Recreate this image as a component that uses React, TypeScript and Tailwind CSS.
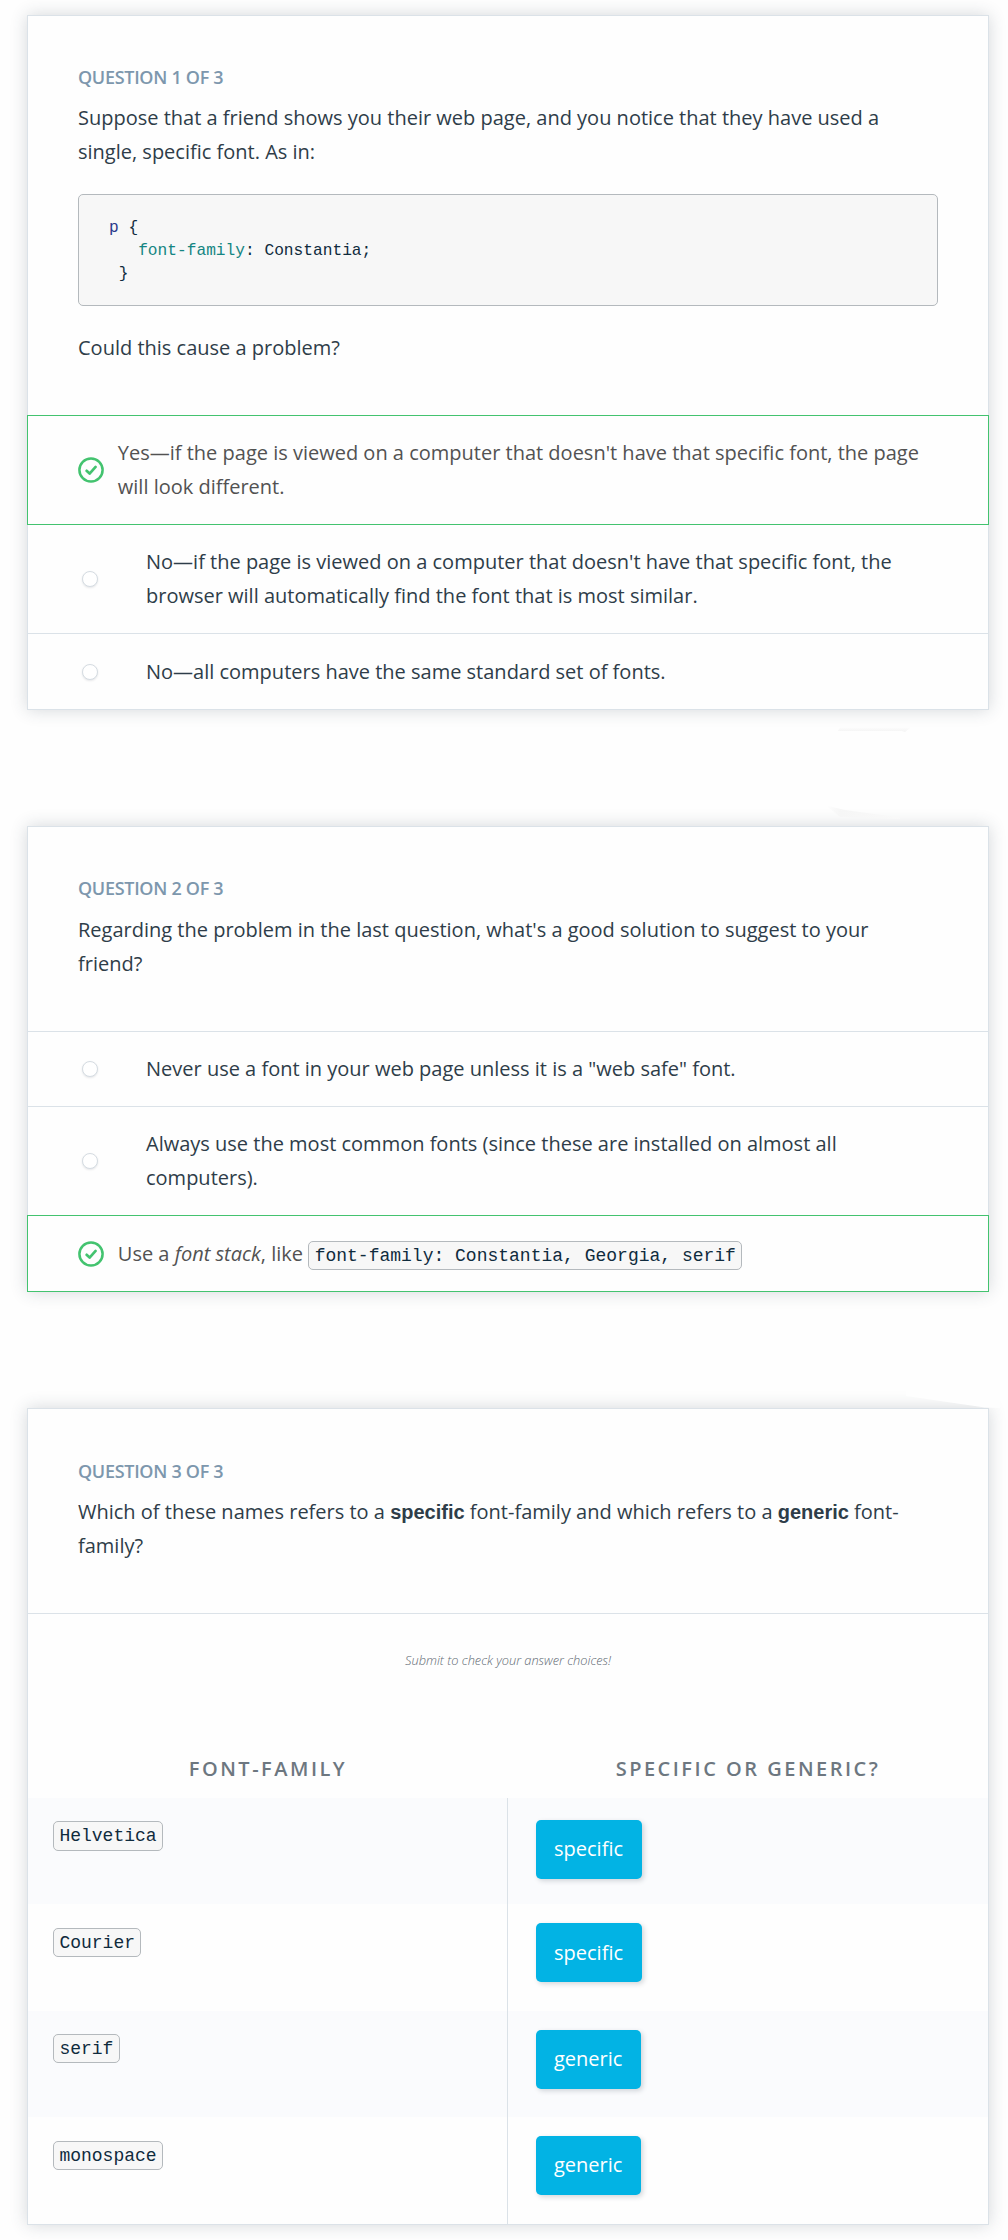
import React from "react";

const CARD =
  "w-[962px] border border-[#dbe2e8] bg-[#fefefe] shadow-[0_0_16px_rgba(46,61,73,0.2)]";

function Heading({ n }: { n: number }) {
  return (
    <div className="h-6 text-[18px] leading-6 font-semibold tracking-[-0.3px] text-[#7d97ad] whitespace-nowrap">
      QUESTION {n} OF 3
    </div>
  );
}

function Code({ children }: { children: React.ReactNode }) {
  return (
    <code className="rounded-[5px] border border-[#b4b9bd] bg-[#f7f7f7] px-[5.4px] py-[3.6px] font-['Liberation_Mono',monospace] text-[18px] text-[#0f2b3d]">
      {children}
    </code>
  );
}

function Check() {
  return (
    <svg className="h-[26px] w-[26px] shrink-0" viewBox="0 0 26 26" fill="none" stroke="#43c36f">
      <circle cx="13" cy="13" r="11.6" strokeWidth="2.5" />
      <path d="M8.6 13.8L11.6 16.6L17.6 9.9" strokeWidth="2.7" strokeLinecap="round" strokeLinejoin="round" />
    </svg>
  );
}

function Correct({ className, children }: { className: string; children: React.ReactNode }) {
  return (
    <div className={`-mx-px flex items-center border border-[#43c36f] pl-[50px] ${className}`}>
      <Check />
      <div className="ml-[13.8px] w-[815px] text-[#525252]">{children}</div>
    </div>
  );
}

function Choice({ className, children }: { className: string; children: React.ReactNode }) {
  return (
    <div className={`flex items-center border-[#dbe2e8] pl-[54px] ${className}`}>
      <span className="h-[16px] w-[16px] shrink-0 rounded-full border border-[#d5dce2] bg-white shadow-[0_1px_2px_rgba(46,61,73,0.12)]" />
      <div className="ml-[48px] w-[770px]">{children}</div>
    </div>
  );
}

const ROWS = [
  { name: "Helvetica", kind: "specific", pad: "pt-[22px]", text: "pt-[12px]" },
  { name: "Courier", kind: "specific", pad: "pt-[18.6px]", text: "pt-[13px]" },
  { name: "serif", kind: "generic", pad: "pt-[19px]", text: "pt-[12px]" },
  { name: "monospace", kind: "generic", pad: "pt-[18.6px]", text: "pt-[12px]" },
];

/* Soft page texture in the right margin between the cards. */
function Wisps() {
  return (
    <svg className="pointer-events-none absolute top-0 left-0 h-[2240px] w-[1008px]" viewBox="0 0 1008 2240">
      <defs>
        <linearGradient id="fadeUp" x1="0" y1="1" x2="0" y2="0">
          <stop offset="0" stopColor="#f3f3f3" />
          <stop offset="1" stopColor="#fefefe" />
        </linearGradient>
        <linearGradient id="fadeLeft" x1="0" y1="0" x2="1" y2="0">
          <stop offset="0" stopColor="#f6f6f6" stopOpacity="0" />
          <stop offset="0.2" stopColor="#f6f6f6" />
          <stop offset="1" stopColor="#f9f9f9" />
        </linearGradient>
      </defs>
      <path d="M838 731L902 731L905 732L911 727L840 727Z" fill="url(#fadeUp)" />
      <path d="M826 805.500L845 810L900 817.500L900 819L840 817Z" fill="url(#fadeLeft)" />
      <path d="M906 1396L985 1407.500L1000 1408L1000 1390L906 1390Z" fill="#fefefe" />
    </svg>
  );
}

export default function App() {
  return (
    <main className="relative h-[2240px] w-[1008px] overflow-hidden bg-[#fefefe] pt-[15px] pl-[27px] font-['Open_Sans',sans-serif] text-[20px] leading-[34px] text-[#2e3d49]">
      <section className={`${CARD} h-[695px]`}>
        <div className="h-[399px] px-[50px] pt-[49px]">
          <Heading n={1} />
          <p className="mt-[12px]">
            Suppose that a friend shows you their web page, and you notice that they have used a
            single, specific font. As in:
          </p>
          <pre className="mt-[25px] h-[112px] rounded-[5px] border border-[#b4b9bd] bg-[#f7f7f7] pt-[22px] pl-[30px] font-['Liberation_Mono',monospace] text-[16.2px] leading-[23px] text-[#0f2b3d]">
            <span className="text-[#2a3a8c]">p</span>
            {" {\n   "}
            <span className="text-[#148582]">font-family</span>
            {": Constantia;\n }"}
          </pre>
          <p className="mt-[25px]">Could this cause a problem?</p>
        </div>
        <Correct className="h-[110px]">
          Yes—if the page is viewed on a computer that doesn't have that specific font, the page
          will look different.
        </Correct>
        <Choice className="h-[109px] border-b">
          No—if the page is viewed on a computer that doesn't have that specific font, the browser
          will automatically find the font that is most similar.
        </Choice>
        <Choice className="h-[75px]">No—all computers have the same standard set of fonts.</Choice>
      </section>

      <section className={`${CARD} mt-[116px] h-[466px]`}>
        <div className="h-[204px] px-[50px] pt-[49px]">
          <Heading n={2} />
          <p className="mt-[13px] w-[830px]">
            Regarding the problem in the last question, what's a good solution to suggest to your
            friend?
          </p>
        </div>
        <Choice className="h-[75px] border-t">
          Never use a font in your web page unless it is a "web safe" font.
        </Choice>
        <Choice className="h-[109px] border-t">
          Always use the most common fonts (since these are installed on almost all computers).
        </Choice>
        <Correct className="h-[77px] [&>div]:pt-[2px]">
          Use a <em>font stack</em>, like <Code>font-family: Constantia, Georgia, serif</Code>
        </Correct>
      </section>

      <section className={`${CARD} mt-[116px] h-[817px]`}>
        <div className="h-[204px] px-[50px] pt-[50px]">
          <Heading n={3} />
          <p className="mt-[12px]">
            Which of these names refers to a{" "}
            <strong className="font-['Liberation_Sans',sans-serif] font-bold">specific</strong>{" "}
            font-family and which refers to a{" "}
            <strong className="font-['Liberation_Sans',sans-serif] font-bold">generic</strong>{" "}
            font-family?
          </p>
        </div>
        <div className="h-[185px] border-t border-[#dbe2e8] pt-[36px]">
          <p className="h-5 text-center text-[12.8px] leading-5 font-light text-[#5f6a73] italic">
            Submit to check your answer choices!
          </p>
          <div className="mt-[82px] grid grid-cols-2 text-center text-[20px] font-semibold tracking-[2.5px] text-[#6d7780]">
            <div>FONT-FAMILY</div>
            <div>SPECIFIC OR GENERIC?</div>
          </div>
        </div>
        <div>
          {ROWS.map((r) => (
            <div key={r.name} className="grid h-[106.4px] grid-cols-2 odd:bg-[#fafbfd]">
              <div className="border-r border-[#dbe2e8] pt-[19px] pl-[25px]">
                <Code>{r.name}</Code>
              </div>
              <div className={`pl-[28px] ${r.pad}`}>
                <span
                  className={`inline-block h-[59px] rounded-[5px] bg-[#02b3e4] pr-[19px] pl-[18px] text-white shadow-[2px_2px_5px_rgba(46,61,73,0.2)] ${r.text}`}
                >
                  {r.kind}
                </span>
              </div>
            </div>
          ))}
        </div>
      </section>
      <Wisps />
    </main>
  );
}
